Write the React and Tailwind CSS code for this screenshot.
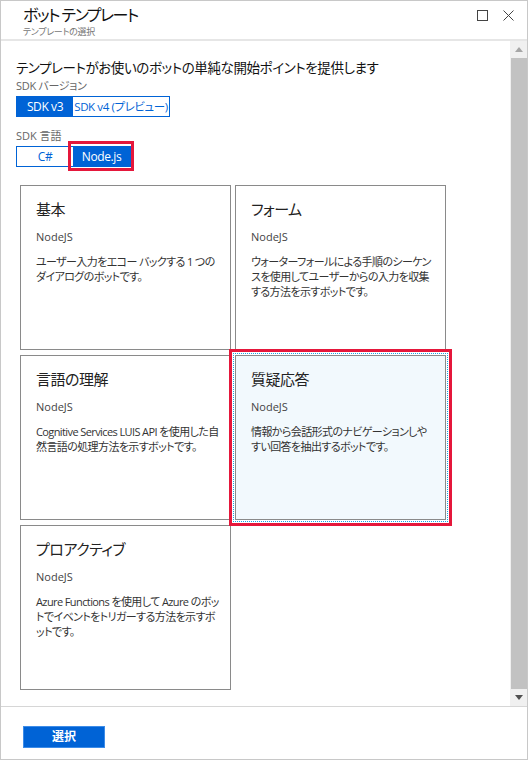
import React from "react";

const cards = [
  {
    title: "基本",
    text: "ユーザー入力をエコー バックする 1 つのダイアログのボットです。",
  },
  {
    title: "フォーム",
    text: "ウォーターフォールによる手順のシーケンスを使用してユーザーからの入力を収集する方法を示すボットです。",
  },
  {
    title: "言語の理解",
    text: "Cognitive Services LUIS API を使用した自然言語の処理方法を示すボットです。",
  },
  {
    title: "質疑応答",
    text: "情報から会話形式のナビゲーションしやすい回答を抽出するボットです。",
    selected: true,
  },
  {
    title: "プロアクティブ",
    text: "Azure Functions を使用して Azure のボットでイベントをトリガーする方法を示すボットです。",
  },
];

const Card = ({ title, text, selected }) => {
  const body = (
    <div
      className={
        "h-[165px] border border-[#8a8a8a] pl-[15px] pr-[10px] pt-[13px] " +
        (selected
          ? "bg-[#f2f9fd] outline-1 outline-dotted outline-[#1ba1e2] outline-offset-[1px]"
          : "bg-white")
      }
    >
      <div className="text-[15px] leading-[20px] tracking-[-0.5px] text-[#222]">{title}</div>
      <div className="mt-[10px] text-[11px] leading-[16px] text-[#444]">NodeJS</div>
      <div className="mt-[9px] text-[11px] leading-[15px] tracking-[-0.6px] text-[#333]">{text}</div>
    </div>
  );
  if (!selected) return body;
  return (
    <div className="relative">
      {body}
      <div className="absolute -inset-[6px] border-[3px] border-[#e5173b] pointer-events-none" />
    </div>
  );
};

const Toggle = ({ items, active, marked }) => (
  <div className="flex border border-[#0063d6] w-fit h-[21px]">
    {items.map((it, i) => (
      <div
        key={it.label}
        className={
          "relative flex items-center justify-center whitespace-nowrap tracking-[-0.4px] " +
          it.w +
          (i === active ? " bg-[#0063d6] text-white" : " bg-white text-[#0063d6]")
        }
      >
        {it.label}
        {marked && i === active && (
          <div className="absolute -left-[5px] -right-[4px] -top-[6px] -bottom-[5px] border-[3px] border-[#e5173b]" />
        )}
      </div>
    ))}
  </div>
);

export default function App() {
  return (
    <div className="w-[528px] h-[760px] bg-white border border-[#c8c8c8] flex flex-col text-[#222] font-['Open_Sans','Noto_Sans_CJK_JP',sans-serif] [font-feature-settings:'palt']">
      {/* header */}
      <div className="relative h-[40px] flex-none border-b-2 border-[#e6e6e6] pl-[22px] pt-[5px]">
        <div className="text-[16px] leading-[18px] tracking-[-1.5px] text-[#111]">ボット テンプレート</div>
        <div className="mt-[3px] text-[9px] leading-[10px] tracking-[-0.3px] text-[#777]">テンプレートの選択</div>
        <div className="absolute left-[476px] top-[9px] w-[11px] h-[11px] border border-[#444]" />
        <svg className="absolute left-[501px] top-[8px]" width="13" height="13" viewBox="0 0 13 13">
          <path d="M1.5 1.5 L11.5 11.5 M11.5 1.5 L1.5 11.5" stroke="#444" strokeWidth="1" fill="none" />
        </svg>
      </div>

      {/* body */}
      <div className="flex flex-1 min-h-0">
        <div className="flex-1 pl-[15px] pt-[17px]">
          <div className="text-[13.5px] leading-[20px] tracking-[-0.4px] text-[#111]">
            テンプレートがお使いのボットの単純な開始ポイントを提供します
          </div>
          <div className="mt-[1px] text-[11px] leading-[14px] tracking-[-0.3px] text-[#666]">SDK バージョン</div>
          <div className="mt-[3px]">
            <Toggle
              items={[
                { label: "SDK v3", w: "w-[56px] text-[12px]" },
                { label: "SDK v4 (プレビュー)", w: "w-[96px] text-[11.5px]" },
              ]}
              active={0}
            />
          </div>
          <div className="mt-[12px] text-[11px] leading-[14px] text-[#666]">SDK 言語</div>
          <div className="mt-[3px]">
            <Toggle
              items={[
                { label: "C#", w: "w-[56px] text-[12px]" },
                { label: "Node.js", w: "w-[57px] text-[12px]" },
              ]}
              active={1}
              marked
            />
          </div>
          <div className="mt-[18px] ml-[4px] grid grid-cols-[211px_211px] gap-x-[4px] gap-y-[5px]">
            {cards.map((c) => (
              <Card key={c.title} {...c} />
            ))}
          </div>
        </div>

        {/* scrollbar */}
        <div className="w-[17px] flex-none bg-[#f0f0f0] flex flex-col">
          <div className="h-[17px] flex items-center justify-center">
            <svg width="8" height="5" viewBox="0 0 8 5">
              <path d="M0 5 L4 0 L8 5 Z" fill="#a6a6a6" />
            </svg>
          </div>
          <div className="flex-1 ml-[1px] bg-[#c2c2c2]" />
          <div className="h-[17px] flex items-center justify-center">
            <svg width="8" height="5" viewBox="0 0 8 5">
              <path d="M0 0 L8 0 L4 5 Z" fill="#505050" />
            </svg>
          </div>
        </div>
      </div>

      {/* footer */}
      <div className="h-[53px] flex-none border-t border-[#d6d6d6] pl-[22px] pt-[16px]">
        <button className="w-[82px] h-[22px] bg-[#0063d6] border border-[#3d8ce8] text-white text-[12px] font-bold leading-none">
          選択
        </button>
      </div>
    </div>
  );
}
